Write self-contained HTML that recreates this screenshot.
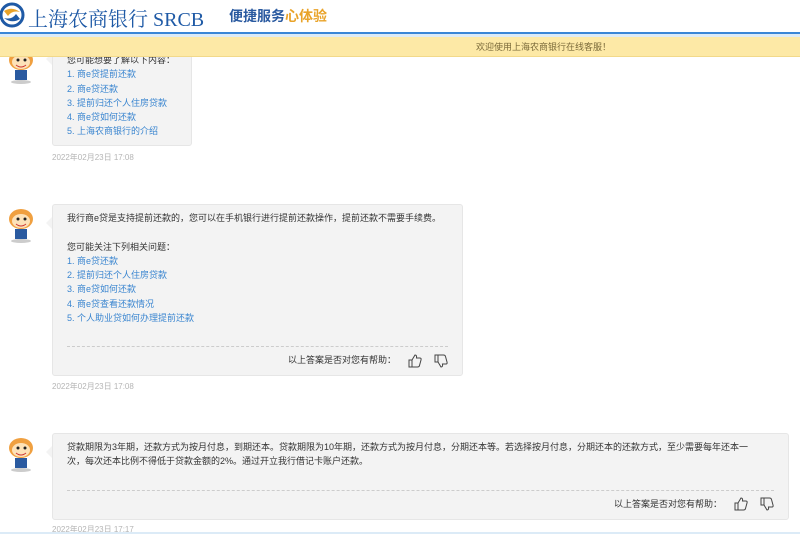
<!DOCTYPE html>
<html><head><meta charset="utf-8"><style>
*{margin:0;padding:0;box-sizing:border-box}
body{width:800px;height:534px;overflow:hidden;background:#fff;font-family:"Liberation Sans","Noto Sans CJK SC",sans-serif;position:relative;font-size:9px;color:#333}
.hdr{position:absolute;left:0;top:0;width:800px;height:32px;background:#fff;z-index:5}
.blue{position:absolute;left:0;top:32px;width:800px;height:2px;background:#3a86d6;z-index:5}
.lb{position:absolute;left:0;top:34px;width:800px;height:3px;background:#dcebf7;z-index:5}
.yel{position:absolute;left:0;top:37px;width:800px;height:20px;background:#fde9a6;border-bottom:1px solid #f2d98a;z-index:5;font-size:9px;color:#7a6a3a;line-height:20px;padding-left:476px}
.b{position:absolute;background:#f3f3f3;border:1px solid #e6e6e6;border-radius:3px;padding:6px 14px 0 14px;line-height:14.3px}
.b:before{content:"";position:absolute;left:-7px;top:12px;border:6px solid transparent;border-right-color:#f3f3f3;border-left:0}
.lk{color:#3b86d0}
.ts{position:absolute;left:52px;font-size:8px;color:#b5b5b5}
.sep{border-top:1px dashed #ccc;margin-top:21px;height:0}
.fb{text-align:right;height:26px;line-height:26px;font-size:9px;color:#333}
.fb svg{vertical-align:middle;margin-left:12px}
.av{position:absolute;left:6px;width:32px;height:38px}
</style></head><body>
<div class="hdr">
<svg style="position:absolute;left:0;top:2px" width="26" height="26" viewBox="0 0 26 26"><circle cx="12" cy="13" r="11" fill="none" stroke="#1f5aa6" stroke-width="3"/><path d="M4 9 Q12 4 20 10 Q12 8 8 14Z" fill="#e9a329"/><path d="M20 17 Q12 22 4 16 Q12 18 16 12Z" fill="#1f5aa6"/></svg>
<div style="position:absolute;left:28px;top:3px;font-size:20px;color:#1f5aa6;font-family:'Liberation Serif','Noto Serif CJK SC',serif;white-space:nowrap">上海农商银行 SRCB</div>
<div style="position:absolute;left:229px;top:6px;font-size:14px;font-weight:bold;color:#2a5aa0;white-space:nowrap">便捷服务<span style="color:#e9a329">心体验</span></div>
</div>
<div class="blue"></div><div class="lb"></div>
<div class="yel">欢迎使用上海农商银行在线客服！</div>

<svg class="av" style="top:46px" viewBox="0 0 32 38"><ellipse cx="15" cy="14" rx="12" ry="10" fill="#f0a040"/><ellipse cx="15" cy="16" rx="9" ry="7" fill="#fde2b8"/><circle cx="12" cy="14" r="1.5" fill="#222"/><circle cx="19" cy="14" r="1.5" fill="#222"/><path d="M10 19 Q15 23 20 19" stroke="#c33" fill="none"/><rect x="9" y="24" width="12" height="10" fill="#2a5aa0"/><ellipse cx="15" cy="36" rx="10" ry="2" fill="#ccc"/></svg>
<div class="b" style="left:52px;top:40px;width:140px;height:106px;padding-top:12px">
您可能想要了解以下内容：<br><span class="lk">1. 商e贷提前还款<br>2. 商e贷还款<br>3. 提前归还个人住房贷款<br>4. 商e贷如何还款<br>5. 上海农商银行的介绍</span></div>
<div class="ts" style="top:152px">2022年02月23日 17:08</div>

<svg class="av" style="top:205px" viewBox="0 0 32 38"><ellipse cx="15" cy="14" rx="12" ry="10" fill="#f0a040"/><ellipse cx="15" cy="16" rx="9" ry="7" fill="#fde2b8"/><circle cx="12" cy="14" r="1.5" fill="#222"/><circle cx="19" cy="14" r="1.5" fill="#222"/><path d="M10 19 Q15 23 20 19" stroke="#c33" fill="none"/><rect x="9" y="24" width="12" height="10" fill="#2a5aa0"/><ellipse cx="15" cy="36" rx="10" ry="2" fill="#ccc"/></svg>
<div class="b" style="left:52px;top:204px;width:411px;height:172px">
我行商e贷是支持提前还款的，您可以在手机银行进行提前还款操作，提前还款不需要手续费。<br><br>您可能关注下列相关问题：<br><span class="lk">1. 商e贷还款<br>2. 提前归还个人住房贷款<br>3. 商e贷如何还款<br>4. 商e贷查看还款情况<br>5. 个人助业贷如何办理提前还款</span>
<div class="sep"></div>
<div class="fb">以上答案是否对您有帮助：<svg width="14" height="14" viewBox="0 0 14 14"><path d="M1 6h3v7H1zM4 6l3-5q2 0 1.5 3H12q1.5 0 1 2l-1.5 5.5q-.3 1.5-2 1.5H4" fill="none" stroke="#444"/></svg><svg width="14" height="14" viewBox="0 0 14 14"><path d="M1 1h3v7H1zM4 8l3 5q2 0 1.5-3H12q1.5 0 1-2L11.5 2.5Q11.2 1 9.5 1H4" fill="none" stroke="#444"/></svg></div>
</div>
<div class="ts" style="top:381px">2022年02月23日 17:08</div>

<svg class="av" style="top:434px" viewBox="0 0 32 38"><ellipse cx="15" cy="14" rx="12" ry="10" fill="#f0a040"/><ellipse cx="15" cy="16" rx="9" ry="7" fill="#fde2b8"/><circle cx="12" cy="14" r="1.5" fill="#222"/><circle cx="19" cy="14" r="1.5" fill="#222"/><path d="M10 19 Q15 23 20 19" stroke="#c33" fill="none"/><rect x="9" y="24" width="12" height="10" fill="#2a5aa0"/><ellipse cx="15" cy="36" rx="10" ry="2" fill="#ccc"/></svg>
<div class="b" style="left:52px;top:433px;width:737px;height:87px;padding-right:24px">
贷款期限为3年期，还款方式为按月付息，到期还本。贷款期限为10年期，还款方式为按月付息，分期还本等。若选择按月付息，分期还本的还款方式，至少需要每年还本一次，每次还本比例不得低于贷款金额的2%。通过开立我行借记卡账户还款。
<div class="sep" style="margin-right:-10px"></div>
<div class="fb" style="margin-right:-10px">以上答案是否对您有帮助：<svg width="14" height="14" viewBox="0 0 14 14"><path d="M1 6h3v7H1zM4 6l3-5q2 0 1.5 3H12q1.5 0 1 2l-1.5 5.5q-.3 1.5-2 1.5H4" fill="none" stroke="#444"/></svg><svg width="14" height="14" viewBox="0 0 14 14"><path d="M1 1h3v7H1zM4 8l3 5q2 0 1.5-3H12q1.5 0 1-2L11.5 2.5Q11.2 1 9.5 1H4" fill="none" stroke="#444"/></svg></div>
</div>
<div class="ts" style="top:524px">2022年02月23日 17:17</div>
<div style="position:absolute;left:0;top:532px;width:800px;height:2px;background:#dcebf7"></div>
</body></html>
